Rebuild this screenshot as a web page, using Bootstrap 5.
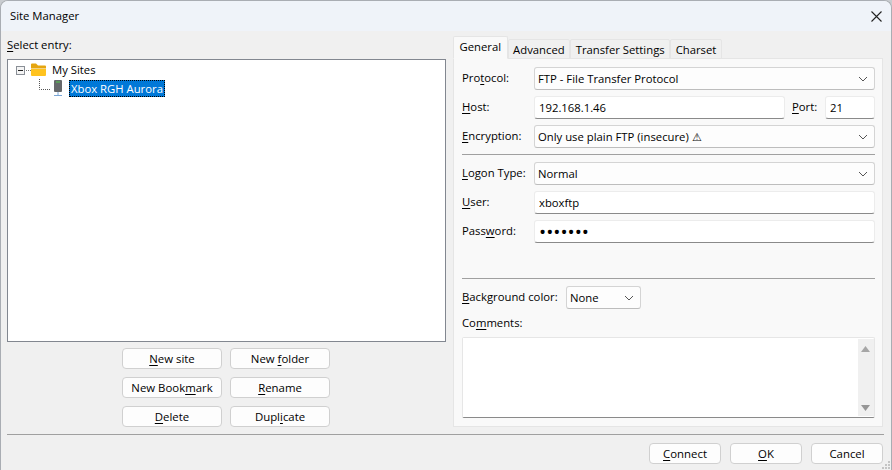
<!DOCTYPE html>
<html lang="en">

<head>
    <meta charset="UTF-8">
    <meta name="viewport" content="width=device-width, initial-scale=1.0">
    <title>Site Manager</title>
    <link href="https://cdn.jsdelivr.net/npm/bootstrap@5.3.2/dist/css/bootstrap.min.css" rel="stylesheet">
    <style>
        html, body { height: 100%; overflow: hidden; background: #c9ccd0; }
        body { font: 11.3px/16px "Open Sans", "Noto Sans", sans-serif; color: #000; }
        u { text-underline-offset: 2px; text-decoration-thickness: 1px; }
        .dlg { width: 892px; height: 470px; background: #f0f0f0; border-radius: 8px 8px 0 0; border: 1px solid #a9adb3; border-bottom: 0; overflow: hidden; position: relative; }
        .dlg-title { height: 30px; background: #eff3f9; padding: 0 9px; }
        .dlg-body { height: 396px; padding: 6px 6px 0; gap: 7px; }
        .left-pane { width: 439px; }
        .entry-label { height: 22px; }
        .tree-box { height: 283px; background: #fff; border: 1px solid #828790; padding: 1px 0 0 8px; }
        .tree-row { height: 18px; }
        .tree-row svg { flex: none; }
        .tree-sel { background: #0078d7; color: #fff; outline: 1px dotted #000; outline-offset: -1px; padding: 0 2px; line-height: 17px; margin-left: 3px; }
        .btn-grid { display: grid; grid-template-columns: 100px 100px; gap: 8px; margin: 6px 0 0 115px; }
        .win-btn { --bs-btn-font-size: 11.4px; --bs-btn-padding-y: 0; --bs-btn-padding-x: 0; --bs-btn-border-radius: 4px; --bs-btn-border-color: #d0d0d0; --bs-btn-bg: #fdfdfd; --bs-btn-color: #000; --bs-btn-line-height: 18px; height: 21px; }
        .right-pane { width: 430px; }
        .dlg-tabs { --bs-nav-tabs-border-color: #e5e5e5; --bs-nav-tabs-border-radius: 2px; --bs-nav-tabs-link-active-bg: #f9f9f9; --bs-nav-tabs-link-active-color: #000; --bs-nav-tabs-link-active-border-color: #e5e5e5 #e5e5e5 #f9f9f9; height: 22px; align-items: flex-end; }
        .dlg-tabs .nav-link { --bs-nav-link-padding-x: 4.5px; --bs-nav-link-padding-y: 0; --bs-nav-link-color: #000; --bs-nav-link-font-size: 11.3px; height: 20px; line-height: 19px; background: #f0f0f0; border-color: #e5e5e5; }
        .dlg-tabs .nav-link.active { height: 23px; line-height: 19px; padding: 0 5.5px; background: #f9f9f9; border-bottom-color: #f9f9f9; }
        .tab-panel { height: 368px; background: #f9f9f9; border: 1px solid #e5e5e5; border-top: 0; padding: 8px 7px 0 8px; }
        .f-row { height: 23px; align-items: center; }
        .f-row label { margin-bottom: 2px; }
        .f-gap { margin-top: 6px; }
        .f-label { width: 72px; flex: none; }
        .f-select, .f-input { font-size: 11.3px; line-height: 16px; color: #000; border-radius: 3px; height: 23px; min-height: 0; }
        .f-select { padding: 0 22px 0 3px; border: 1px solid #d4d4d4; border-bottom-color: #bdbdbd; background-color: #fdfdfd; background-image: url("data:image/svg+xml,%3csvg xmlns='http://www.w3.org/2000/svg' viewBox='0 0 10 6'%3e%3cpath fill='none' stroke='%23555' d='M1 1l4 4 4-4'/%3e%3c/svg%3e"); background-size: 10px 6px; background-position: right 6px center; }
        .f-input { padding: 0 4px; border: 1px solid #ececec; border-bottom: 1px solid #8a8a8a; background: #fff; }
        .host-input { width: 251px; flex: none; }
        .port-input { width: 50px; flex: none; }
        .port-label { width: 40px; flex: none; padding-left: 7px; }
        .pass-input { font-size: 19px; padding-left: 4px; }
        .bg-label { width: 104px; flex: none; white-space: nowrap; }
        .bg-select { width: 75px; flex: none; }
        .f-line { border-top: 1px solid #a0a0a0; }
        .line-a { margin: 6px 0 7px; }
        .line-b { margin: 35px 0 7px; }
        .mem-label { margin: 6px 0; }
        .mem-box { height: 81px; border: 1px solid #e6e6e6; border-bottom: 1px solid #8a8a8a; background: #fff; border-radius: 2px; }
        .mem-text { resize: none; }
        .mem-bar { width: 17px; margin: 1px 0; padding: 7px 0 5px; background: #f0f0f0; }
        .foot-line { border-top: 1px solid #a0a0a0; margin: 7px 7px 0 6px; }
        .foot-btns { gap: 9px; padding: 8px 8px 0 0; }
        .foot-btns .win-btn { width: 72px; }
        .grip { position: absolute; right: 1px; bottom: 1px; }
    </style>
</head>

<body>
    <div class="dlg">
        <div class="dlg-title d-flex align-items-center justify-content-between">
            <span>Site Manager</span>
            <svg width="11" height="11" viewBox="0 0 11 11"><path d="M.5.5l10 10M10.5.5l-10 10" stroke="#222" stroke-width="1.1" fill="none"/></svg>
        </div>

        <div class="dlg-body d-flex">
            <div class="left-pane">
                <div class="entry-label"><span><u>S</u>elect entry:</span></div>
                <div class="tree-box">
                    <div class="tree-row d-flex align-items-center">
                        <svg width="32" height="18" viewBox="0 0 32 18">
                            <rect x="0.5" y="5.5" width="8" height="8" fill="#f4f4f4" stroke="#8a8f96"/>
                            <path d="M2 9.5h5" stroke="#222"/>
                            <path d="M10 9.5h5" stroke="#777" stroke-dasharray="1 1"/>
                            <path d="M15 3.5q0-1 1-1h4l2 2h7q1 0 1 1v2H15z" fill="#e5a50f"/>
                            <path d="M15 8h15v6q0 1-1 1H16q-1 0-1-1z" fill="#ffc31f"/>
                        </svg>
                        <span class="ms-1">My Sites</span>
                    </div>
                    <div class="tree-row d-flex align-items-center">
                        <svg width="50" height="18" viewBox="0 0 50 18">
                            <path d="M23.5 0v10.5H35" stroke="#555" stroke-dasharray="1 1" fill="none"/>
                            <rect x="38" y="1" width="8" height="12" rx="1" fill="#66686b"/>
                            <rect x="40" y="2" width="4" height="2" fill="#5b9a5b"/>
                            <path d="M42 13v3M38 16.5h8" stroke="#7aa6d6"/>
                        </svg>
                        <span class="tree-sel">Xbox RGH Aurora</span>
                    </div>
                </div>
                <div class="btn-grid">
                    <button class="btn win-btn"><u>N</u>ew site</button>
                    <button class="btn win-btn">New <u>f</u>older</button>
                    <button class="btn win-btn">New Book<u>m</u>ark</button>
                    <button class="btn win-btn"><u>R</u>ename</button>
                    <button class="btn win-btn"><u>D</u>elete</button>
                    <button class="btn win-btn">Dupl<u>i</u>cate</button>
                </div>
            </div>

            <div class="right-pane">
                <ul class="nav nav-tabs dlg-tabs flex-nowrap">
                    <li class="nav-item"><a class="nav-link active" href="#">General</a></li>
                    <li class="nav-item"><a class="nav-link" href="#">Advanced</a></li>
                    <li class="nav-item"><a class="nav-link" href="#">Transfer Settings</a></li>
                    <li class="nav-item"><a class="nav-link" href="#">Charset</a></li>
                </ul>
                <div class="tab-panel">
                    <div class="f-row d-flex">
                        <label class="f-label">Pro<u>t</u>ocol:</label>
                        <select class="form-select f-select"><option>FTP - File Transfer Protocol</option></select>
                    </div>
                    <div class="f-row f-gap d-flex">
                        <label class="f-label"><u>H</u>ost:</label>
                        <input class="form-control f-input host-input" value="192.168.1.46">
                        <label class="port-label"><u>P</u>ort:</label>
                        <input class="form-control f-input port-input" value="21">
                    </div>
                    <div class="f-row f-gap d-flex">
                        <label class="f-label"><u>E</u>ncryption:</label>
                        <select class="form-select f-select"><option>Only use plain FTP (insecure) ⚠</option></select>
                    </div>
                    <div class="f-line line-a"></div>
                    <div class="f-row d-flex">
                        <label class="f-label"><u>L</u>ogon Type:</label>
                        <select class="form-select f-select"><option>Normal</option></select>
                    </div>
                    <div class="f-row f-gap d-flex">
                        <label class="f-label"><u>U</u>ser:</label>
                        <input class="form-control f-input" value="xboxftp">
                    </div>
                    <div class="f-row f-gap d-flex">
                        <label class="f-label">Pass<u>w</u>ord:</label>
                        <input class="form-control f-input pass-input" type="password" value="1234567">
                    </div>
                    <div class="f-line line-b"></div>
                    <div class="f-row d-flex">
                        <label class="bg-label"><u>B</u>ackground color:</label>
                        <select class="form-select f-select bg-select"><option>None</option></select>
                    </div>
                    <div class="mem-label">Co<u>m</u>ments:</div>
                    <div class="mem-box d-flex">
                        <textarea class="form-control mem-text border-0 rounded-0 shadow-none flex-grow-1"></textarea>
                        <div class="mem-bar d-flex flex-column justify-content-between align-items-center">
                            <svg width="9" height="6" viewBox="0 0 9 6"><path d="M4.5 0L9 6H0z" fill="#a6a6a6"/></svg>
                            <svg width="9" height="6" viewBox="0 0 9 6"><path d="M0 0h9L4.5 6z" fill="#969696"/></svg>
                        </div>
                    </div>
                </div>
            </div>
        </div>

        <div class="foot-line"></div>
        <div class="foot-btns d-flex justify-content-end">
            <button class="btn win-btn"><u>C</u>onnect</button>
            <button class="btn win-btn"><u>O</u>K</button>
            <button class="btn win-btn">Cancel</button>
        </div>
        <svg class="grip" width="8" height="8" viewBox="0 0 8 8"><path d="M6 0h2v2H6zM3 3h2v2H3zM6 3h2v2H6zM0 6h2v2H0zM3 6h2v2H3zM6 6h2v2H6z" fill="#c4c4c4"/></svg>
    </div>

    <script src="https://cdn.jsdelivr.net/npm/bootstrap@5.3.2/dist/js/bootstrap.bundle.min.js"></script>
</body>

</html>
